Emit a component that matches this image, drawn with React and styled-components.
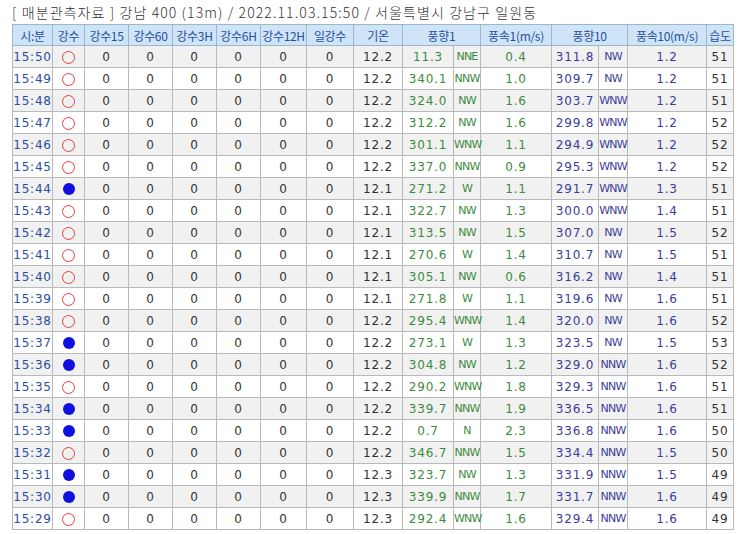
import React from "react";
import styled, { createGlobalStyle } from "styled-components";

const G = createGlobalStyle`
  body { margin: 0; background: #fff; font-family: "Noto Sans CJK KR", "DejaVu Sans", sans-serif; }
`;
const Wrap = styled.div` padding: 2px 0 0 12px; `;
const Title = styled.div` font-size: 14px; color: #333; height: 22px; line-height: 20px; letter-spacing: 1.1px; white-space: nowrap; font-weight: 300; `;
const Table = styled.table`
  border-collapse: collapse; table-layout: fixed; width: 721px; font-size: 12px;
  font-family: "DejaVu Sans", "Noto Sans CJK KR", sans-serif;
`;
const Th = styled.th`
  background: #cde5f6; color: #2b4ea0; font-weight: normal; height: 20px; padding: 0;
  border: 1px solid #9fb6c8; font-family: "Noto Sans CJK KR", sans-serif; font-size: 12px; white-space: nowrap;
  letter-spacing: -0.3px;
`;
const Tr = styled.tr` background: ${p => (p.$odd ? "#f1f1f1" : "#fff")}; `;
const Td = styled.td`
  height: 21px; padding: 0; border: 1px solid #b9b9b9; text-align: center; color: ${p => p.$c || "#333"};
  white-space: nowrap; letter-spacing: ${p => (p.$dir ? "-0.8px" : "0.8px")};
  font-size: ${p => (p.$dir ? "11px" : "12px")};
`;
const Ring = styled.span`
  display: inline-block; border-radius: 50%; vertical-align: middle;
  ${p => (p.$fill ? "background:#1010e0; width:12px; height:12px;" : "border:1.3px solid #e04040; width:11px; height:11px;")}
`;

const raw = `15:50 0 12.2 11.3 NNE 0.4 311.8 NW 1.2 51
15:49 0 12.2 340.1 NNW 1.0 309.7 NW 1.2 51
15:48 0 12.2 324.0 NW 1.6 303.7 WNW 1.2 51
15:47 0 12.2 312.2 NW 1.6 299.8 WNW 1.2 52
15:46 0 12.2 301.1 WNW 1.1 294.9 WNW 1.2 52
15:45 0 12.2 337.0 NNW 0.9 295.3 WNW 1.2 52
15:44 1 12.1 271.2 W 1.1 291.7 WNW 1.3 51
15:43 0 12.1 322.7 NW 1.3 300.0 WNW 1.4 51
15:42 0 12.1 313.5 NW 1.5 307.0 NW 1.5 52
15:41 0 12.1 270.6 W 1.4 310.7 NW 1.5 51
15:40 0 12.1 305.1 NW 0.6 316.2 NW 1.4 51
15:39 0 12.1 271.8 W 1.1 319.6 NW 1.6 51
15:38 0 12.2 295.4 WNW 1.4 320.0 NW 1.6 52
15:37 1 12.2 273.1 W 1.3 323.5 NW 1.5 53
15:36 1 12.2 304.8 NW 1.2 329.0 NNW 1.6 52
15:35 0 12.2 290.2 WNW 1.8 329.3 NNW 1.6 51
15:34 1 12.2 339.7 NNW 1.9 336.5 NNW 1.6 51
15:33 1 12.2 0.7 N 2.3 336.8 NNW 1.6 50
15:32 0 12.2 346.7 NNW 1.5 334.4 NNW 1.5 50
15:31 1 12.3 323.7 NW 1.3 331.9 NNW 1.5 49
15:30 1 12.3 339.9 NNW 1.7 331.7 NNW 1.6 49
15:29 0 12.3 292.4 WNW 1.6 329.4 NNW 1.6 49`.split("\n").map(l => l.split(" "));

const widths = [40, 32, 44, 44, 44, 44, 46, 47, 49, 51, 27, 71, 47, 29, 79, 27];
const B = "#2b4ea0", GR = "#3d8a3d", NV = "#3b3b9a";

export default function App() {
  return (
    <Wrap>
      <G />
      <Title>[ 매분관측자료 ] 강남 400 (13m) / 2022.11.03.15:50 / 서울특별시 강남구 일원동</Title>
      <Table>
        <colgroup>{widths.map((w, i) => <col key={i} style={{ width: w }} />)}</colgroup>
        <thead>
          <tr>
            {["시:분", "강수", "강수15", "강수60", "강수3H", "강수6H", "강수12H", "일강수", "기온"].map(h => <Th key={h}>{h}</Th>)}
            <Th colSpan={2}>풍향1</Th><Th>풍속1(m/s)</Th><Th colSpan={2}>풍향10</Th><Th>풍속10(m/s)</Th><Th>습도</Th>
          </tr>
        </thead>
        <tbody>
          {raw.map((r, i) => (
            <Tr key={r[0]} $odd={i % 2 === 0}>
              <Td $c={B}>{r[0]}</Td>
              <Td><Ring $fill={r[1] === "1"} /></Td>
              {[0, 1, 2, 3, 4, 5].map(k => <Td key={k}>0</Td>)}
              <Td>{r[2]}</Td>
              <Td $c={GR}>{r[3]}</Td><Td $c={GR} $dir>{r[4]}</Td><Td $c={GR}>{r[5]}</Td>
              <Td $c={NV}>{r[6]}</Td><Td $c={NV} $dir>{r[7]}</Td><Td $c={NV}>{r[8]}</Td>
              <Td>{r[9]}</Td>
            </Tr>
          ))}
        </tbody>
      </Table>
    </Wrap>
  );
}
